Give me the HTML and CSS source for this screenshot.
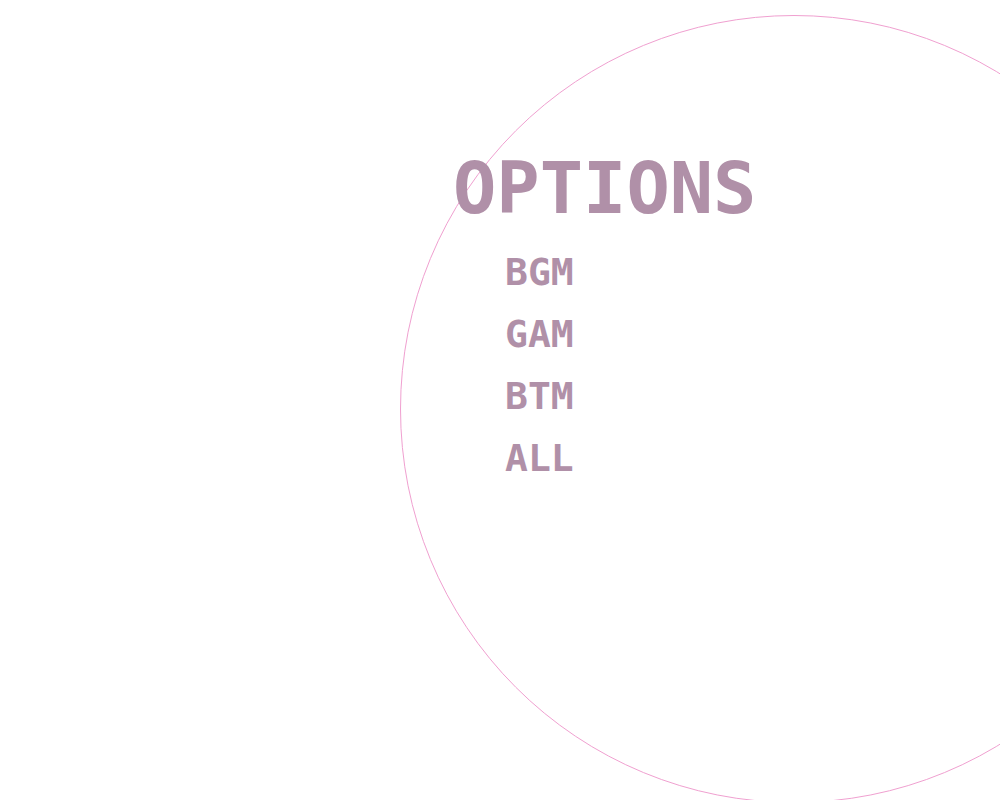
FILE: index.html
```html
<!DOCTYPE html>
<html lang="en">
<head>
<meta charset="utf-8">
<title>Options</title>
<link rel="stylesheet" href="styles.css">
</head>
<body>
<div class="orb"></div>
<main class="menu">
  <h1 class="title">OPTIONS</h1>
  <ul class="items">
    <li class="item">BGM</li>
    <li class="item">GAM</li>
    <li class="item">BTM</li>
    <li class="item">ALL</li>
  </ul>
</main>
</body>
</html>
```

FILE: styles.css
```css
html, body {
  margin: 0;
  padding: 0;
  background: #ffffff;
  width: 1000px;
  height: 800px;
  overflow: hidden;
}

body {
  position: relative;
  font-family: "DejaVu Sans Mono", monospace;
  font-weight: bold;
  color: #b090a8;
}

.orb {
  position: absolute;
  left: 400px;
  top: 15px;
  width: 786px;
  height: 786px;
  border-radius: 50%;
  border: 1px solid #f0a0d0;
  z-index: 0;
}

.menu {
  position: relative;
  z-index: 1;
  padding: 140px 0 0 453px;
}

.title {
  margin: 0;
  font-size: 72px;
  line-height: 96px;
  font-weight: bold;
  letter-spacing: 0;
}

.items {
  list-style: none;
  margin: 0;
  padding: 16px 0 0 52px;
  display: flex;
  flex-direction: column;
  gap: 22px;
}

.item {
  font-size: 38px;
  line-height: 40px;
}
```
